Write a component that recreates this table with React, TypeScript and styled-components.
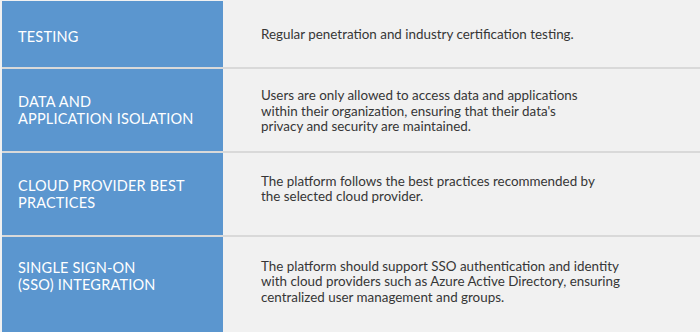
import React from "react";
import styled, { createGlobalStyle } from "styled-components";

const Global = createGlobalStyle`
  html, body { margin: 0; padding: 0; background: #f1f1f1; }
  body { width: 700px; height: 332px; overflow: hidden; }
`;

const Table = styled.div`
  display: flex;
  flex-direction: column;
  padding: 1px 0 0 2px;
  width: 700px;
  box-sizing: border-box;
`;

const Row = styled.div<{ $h: number; $last?: boolean }>`
  display: grid;
  grid-template-columns: 221px 1fr;
  height: ${(p) => p.$h}px;
  border-bottom: ${(p) => (p.$last ? "none" : "2px solid #d9d9d9")};
`;

const Label = styled.div<{ $pt?: number; $pb?: number }>`
  background: #5b96cf;
  color: #ffffff;
  font-family: Lato, "Open Sans", sans-serif;
  font-size: 14.5px;
  line-height: 17px;
  letter-spacing: 0.2px;
  text-transform: uppercase;
  display: flex;
  align-items: center;
  padding: ${(p) => p.$pt ?? 0}px 0 ${(p) => p.$pb ?? 0}px 16px;
  box-sizing: border-box;
`;

const Desc = styled.div<{ $pt?: number; $pb?: number }>`
  color: #363636;
  font-family: Lato, "Open Sans", sans-serif;
  font-size: 13.4px;
  line-height: 15.5px;
  display: flex;
  align-items: center;
  padding: ${(p) => p.$pt ?? 0}px 0 ${(p) => p.$pb ?? 0}px 38px;
  box-sizing: border-box;
`;

const Lines = ({ lines }: { lines: string[] }) => (
  <span>
    {lines.map((l, j) => (
      <React.Fragment key={j}>
        {l}
        {j < lines.length - 1 && <br />}
      </React.Fragment>
    ))}
  </span>
);

const rows = [
  {
    h: 66,
    label: ["TESTING"],
    desc: ["Regular penetration and industry certification testing."],
    lpt: 4, lpb: 0, dpt: 2, dpb: 0,
  },
  {
    h: 82,
    label: ["DATA AND", "APPLICATION ISOLATION"],
    desc: [
      "Users are only allowed to access data and applications",
      "within their organization, ensuring that their data's",
      "privacy and security are maintained.",
    ],
    lpt: 0, lpb: 0, dpt: 3, dpb: 0,
  },
  {
    h: 82,
    label: ["CLOUD PROVIDER BEST", "PRACTICES"],
    desc: [
      "The platform follows the best practices recommended by",
      "the selected cloud provider.",
    ],
    lpt: 0, lpb: 0, dpt: 0, dpb: 10,
  },
  {
    h: 95,
    label: ["SINGLE SIGN-ON", "(SSO) INTEGRATION"],
    desc: [
      "The platform should support SSO authentication and identity",
      "with cloud providers such as Azure Active Directory, ensuring",
      "centralized user management and groups.",
    ],
    lpt: 0, lpb: 18, dpt: 0, dpb: 5,
  },
];

export default function App() {
  return (
    <>
      <Global />
      <Table>
        {rows.map((r, i) => (
          <Row key={i} $h={r.h} $last={i === rows.length - 1}>
            <Label $pt={r.lpt} $pb={r.lpb}>
              <Lines lines={r.label} />
            </Label>
            <Desc $pt={r.dpt} $pb={r.dpb}>
              <Lines lines={r.desc} />
            </Desc>
          </Row>
        ))}
      </Table>
    </>
  );
}
